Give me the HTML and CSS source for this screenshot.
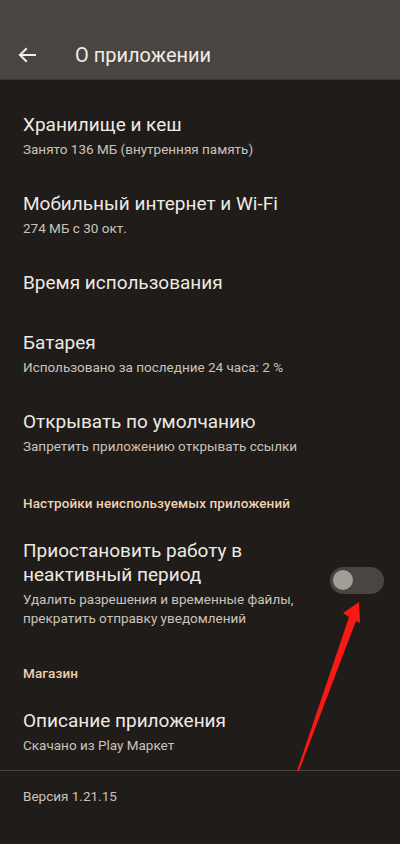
FILE: index.html
```html
<!DOCTYPE html>
<html lang="ru">
<head>
<meta charset="utf-8">
<link rel="stylesheet" href="styles.css">
</head>
<body>
<div class="screen">
  <header class="appbar">
    <svg class="back" width="24" height="24" viewBox="0 0 24 24"><path d="M20 12H5M11 6L5 12L11 18" fill="none" stroke="#f1ece7" stroke-width="2" stroke-linecap="square"/></svg>
    <div class="appbar-title">О приложении</div>
  </header>
  <main class="list">
    <div class="item"><div class="text"><div class="title">Хранилище и кеш</div><div class="sub">Занято 136 МБ (внутренняя память)</div></div></div>
    <div class="item"><div class="text"><div class="title">Мобильный интернет и Wi-Fi</div><div class="sub">274 МБ с 30 окт.</div></div></div>
    <div class="item single"><div class="text"><div class="title">Время использования</div></div></div>
    <div class="item"><div class="text"><div class="title">Батарея</div><div class="sub">Использовано за последние 24 часа: 2 %</div></div></div>
    <div class="item"><div class="text"><div class="title">Открывать по умолчанию</div><div class="sub">Запретить приложению открывать ссылки</div></div></div>
    <div class="section">Настройки неиспользуемых приложений</div>
    <div class="item switch-item">
      <div class="text"><div class="title">Приостановить работу в неактивный период</div><div class="sub multi">Удалить разрешения и временные файлы, прекратить отправку уведомлений</div></div>
      <div class="toggle"><div class="thumb"></div></div>
    </div>
    <div class="section store">Магазин</div>
    <div class="item last"><div class="text"><div class="title">Описание приложения</div><div class="sub">Скачано из Play Маркет</div></div></div>
    <div class="footer">Версия 1.21.15</div>
  </main>
  <svg class="annotation" width="400" height="844" viewBox="0 0 400 844">
    <polygon points="359,602 343,613 349,617 297,771 299,771 356,621 360,623" fill="#f51a14"/>
  </svg>
</div>
</body>
</html>
```
FILE: styles.css
```css
html, body {
  margin: 0;
  padding: 0;
  background: #1f1c19;
}
body {
  font-family: Roboto, "Noto Sans", sans-serif;
  color: #efe9e3;
}
.screen {
  position: relative;
  width: 400px;
  height: 844px;
  overflow: hidden;
  background: #1f1c19;
}
.appbar {
  height: 80px;
  background: #4a4540;
  display: flex;
  align-items: flex-end;
  padding: 0 0 12px 15px;
  box-sizing: border-box;
  border-bottom: 1px solid #3a3632;
}
.back {
  display: block;
  margin-right: 36px;
}
.appbar-title {
  font-size: 20px;
  line-height: 24px;
  color: #f1ece7;
}
.list {
  padding-top: 17px;
}
.item {
  display: flex;
  align-items: center;
  padding: 16px 16px 17px 23px;
}
.item.single {
  padding-bottom: 20px;
}
.item.last {
  padding-bottom: 15px;
}
.text {
  flex: 1;
  min-width: 0;
}
.title {
  font-size: 19px;
  line-height: 24px;
  color: #efe9e3;
}
.sub {
  font-size: 13.5px;
  line-height: 20px;
  margin-top: 2px;
  color: #cbc3ba;
}
.sub.multi {
  line-height: 18.5px;
  margin-top: 3px;
}
.switch-item .text {
  padding-right: 24px;
}
.section {
  font-size: 13.5px;
  font-weight: 500;
  letter-spacing: 0.1px;
  line-height: 20px;
  color: #f0d2b2;
  padding: 20px 23px 10px;
}
.section.store {
  padding-top: 19px;
}
.toggle {
  width: 54px;
  height: 27px;
  border-radius: 14px;
  background: #4a4540;
  display: flex;
  align-items: center;
  padding-left: 3px;
  box-sizing: border-box;
  margin-top: -6px;
}
.thumb {
  width: 20px;
  height: 20px;
  border-radius: 50%;
  background: #a29d97;
}
.footer {
  border-top: 1px solid #48433e;
  padding: 15px 23px;
  font-size: 13.5px;
  line-height: 20px;
  color: #cbc3ba;
}
.annotation {
  position: absolute;
  left: 0;
  top: 0;
  pointer-events: none;
}
```
